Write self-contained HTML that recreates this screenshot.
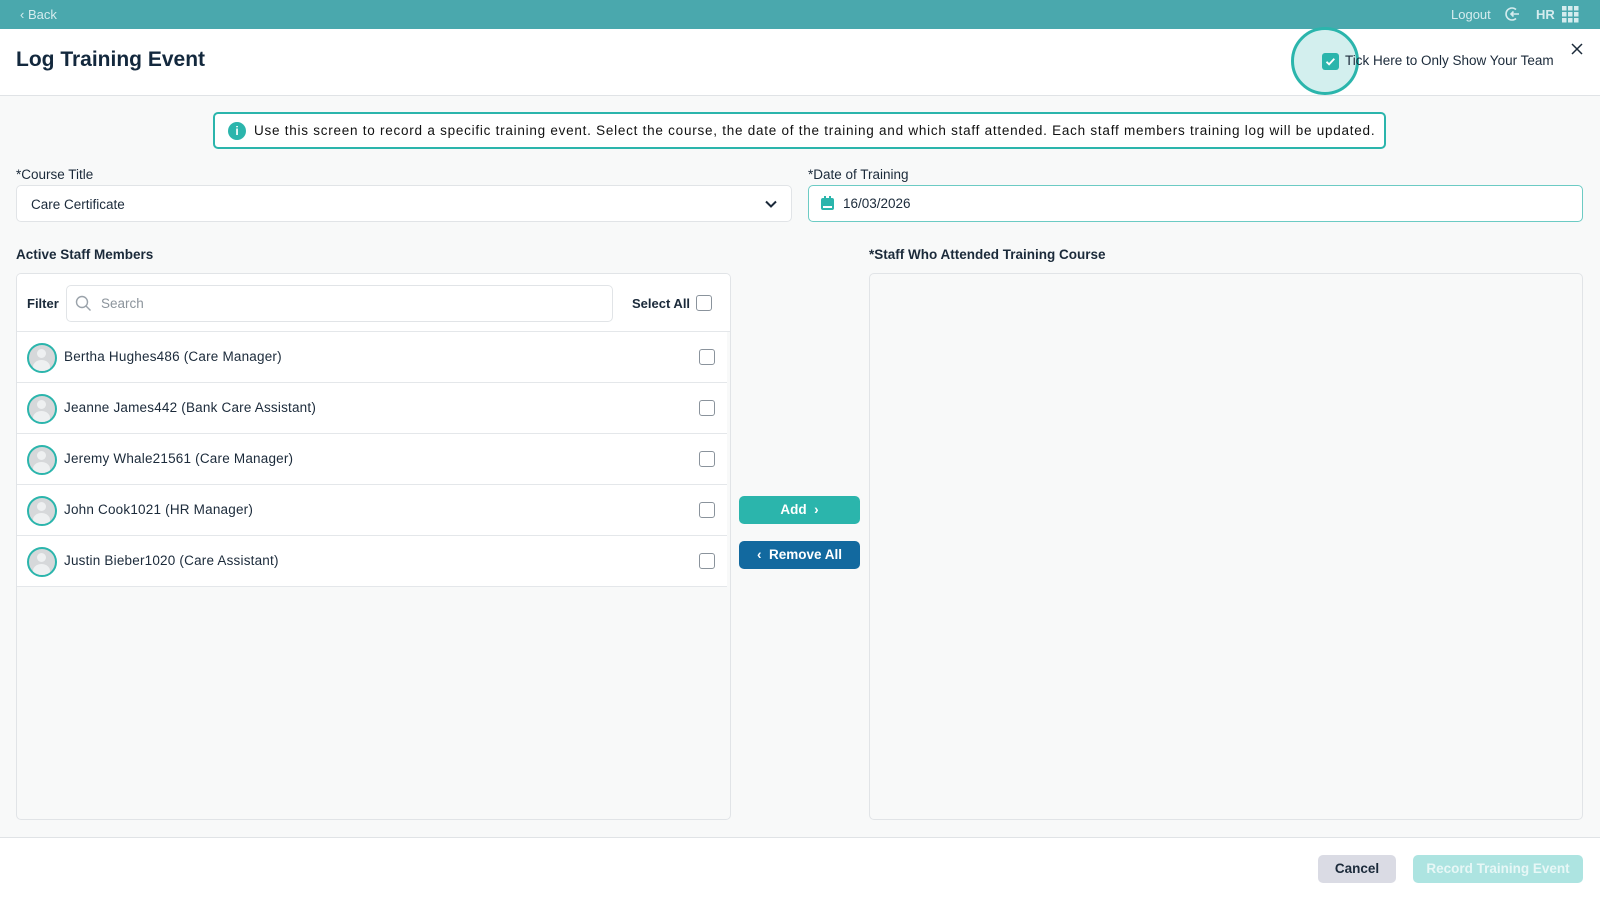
<!DOCTYPE html>
<html><head><meta charset="utf-8"><style>
*{box-sizing:border-box;margin:0;padding:0}
body{width:1600px;height:900px;overflow:hidden;background:#f8f9f9;font-family:"Liberation Sans",sans-serif;color:#1b2a3a;position:relative}
.abs{position:absolute}
.top{left:0;top:0;width:1600px;height:29px;background:#4aa8ad;color:#d5ecee;font-size:13px}
.hdr{left:0;top:29px;width:1600px;height:67px;background:#fff;border-bottom:1px solid #e0e3e6}
.lbl{font-size:13.5px;color:#1b2a3a}
.box{background:#fff;border:1px solid #e1e4e7;border-radius:5px}
.row{position:absolute;left:0;width:710px;height:51px;border-bottom:1px solid #e4e7ea;background:#fff}
.av{position:absolute;left:10px;top:11px;width:30px;height:30px;border-radius:50%;border:2.5px solid #2bb5ac;background:#d6d8da;overflow:hidden}
.av:before{content:"";position:absolute;left:8px;top:4px;width:9px;height:9px;border-radius:50%;background:#eef0f1}
.av:after{content:"";position:absolute;left:4px;top:15px;width:17px;height:14px;border-radius:50% 50% 0 0;background:#eef0f1}
.nm{position:absolute;left:47px;top:17px;font-size:13.5px;letter-spacing:0.2px}
.cb{position:absolute;width:16px;height:16px;border:1.5px solid #8a939c;border-radius:3px;background:#fff}
.btn{border-radius:5px;color:#fff;font-size:13.5px;font-weight:bold;text-align:center}
</style></head><body>
<div class="abs top">
 <div class="abs" style="left:20px;top:7px">‹ Back</div>
 <div class="abs" style="left:1451px;top:7px">Logout</div>
 <svg class="abs" style="left:1505px;top:6px" width="16" height="16" viewBox="0 0 16 16" fill="none" stroke="#d5ecee" stroke-width="1.6"><path d="M11 3.5A6 6 0 1 0 11 12.5"/><path d="M14 8H6M8.5 5.5L6 8l2.5 2.5"/></svg>
 <div class="abs" style="left:1536px;top:7px;font-weight:bold">HR</div>
 <svg class="abs" style="left:1562px;top:6px" width="17" height="17" viewBox="0 0 17 17" fill="#d5ecee"><rect x="0" y="0" width="4.5" height="4.5"/><rect x="6" y="0" width="4.5" height="4.5"/><rect x="12" y="0" width="4.5" height="4.5"/><rect x="0" y="6" width="4.5" height="4.5"/><rect x="6" y="6" width="4.5" height="4.5"/><rect x="12" y="6" width="4.5" height="4.5"/><rect x="0" y="12" width="4.5" height="4.5"/><rect x="6" y="12" width="4.5" height="4.5"/><rect x="12" y="12" width="4.5" height="4.5"/></svg>
</div>
<div class="abs hdr">
 <div class="abs" style="left:16px;top:19px;font-size:21px;font-weight:bold;color:#13283d">Log Training Event</div>
 <div class="abs" style="left:1291px;top:-2px;width:68px;height:68px;border-radius:50%;background:#d3efee;border:3.5px solid #2bb5ac"></div>
 <div class="abs" style="left:1322px;top:24px;width:17px;height:17px;border-radius:3px;background:#2bb5ac"><svg width="17" height="17" viewBox="0 0 17 17"><path d="M4.5 8.8l2.6 2.5 5.2-5.5" stroke="#fff" stroke-width="1.8" fill="none"/></svg></div>
 <div class="abs" style="left:1345px;top:24px;font-size:13.5px;color:#1b2a3a">Tick Here to Only Show Your Team</div>
 <svg class="abs" style="left:1571px;top:14px" width="12" height="12" viewBox="0 0 12 12"><path d="M1 1l10 10M11 1L1 11" stroke="#1b2a3a" stroke-width="1.5"/></svg>
</div>
<div class="abs" style="left:213px;top:112px;width:1173px;height:37px;border:2px solid #2bb5ac;border-radius:5px;background:#fff">
 <div class="abs" style="left:13px;top:8px;width:18px;height:18px;border-radius:50%;background:#2bb5ac;color:#fff;font-size:12px;font-weight:bold;text-align:center;line-height:18px">i</div>
 <div class="abs" style="left:39px;top:9px;font-size:13.5px;color:#111;white-space:nowrap;letter-spacing:0.75px">Use this screen to record a specific training event. Select the course, the date of the training and which staff attended. Each staff members training log will be updated.</div>
</div>
<div class="abs lbl" style="left:16px;top:167px">*Course Title</div>
<div class="abs box" style="left:16px;top:185px;width:776px;height:37px">
 <div class="abs" style="left:14px;top:11px;font-size:13.5px">Care Certificate</div>
 <svg class="abs" style="left:748px;top:13px" width="12" height="10" viewBox="0 0 12 10"><path d="M1 2.5l5 5 5-5" stroke="#1b2a3a" stroke-width="2" fill="none"/></svg>
</div>
<div class="abs lbl" style="left:808px;top:167px">*Date of Training</div>
<div class="abs box" style="left:808px;top:185px;width:775px;height:37px;border:1.5px solid #6ccbc4">
 <svg class="abs" style="left:11px;top:10px" width="15" height="15" viewBox="0 0 15 15"><rect x="1" y="2" width="13" height="12" rx="2" fill="#2bb5ac"/><rect x="3" y="10" width="9" height="2" fill="#fff"/><rect x="4" y="0" width="2" height="3" fill="#2bb5ac"/><rect x="9" y="0" width="2" height="3" fill="#2bb5ac"/></svg>
 <div class="abs" style="left:34px;top:10px;font-size:13.5px">16/03/2026</div>
</div>
<div class="abs lbl" style="left:16px;top:247px;font-weight:bold">Active Staff Members</div>
<div class="abs lbl" style="left:869px;top:247px;font-weight:bold">*Staff Who Attended Training Course</div>
<div class="abs box" style="left:16px;top:273px;width:715px;height:547px;background:#f8f9f9;overflow:hidden">
 <div class="abs" style="left:0;top:0;width:715px;height:58px;background:#fff;border-bottom:1px solid #e4e7ea">
  <div class="abs" style="left:10px;top:22px;font-size:13px;font-weight:bold">Filter</div>
  <div class="abs" style="left:49px;top:11px;width:547px;height:37px;border:1px solid #e1e4e7;border-radius:5px">
   <svg class="abs" style="left:8px;top:9px" width="17" height="17" viewBox="0 0 17 17"><circle cx="7" cy="7" r="5.5" stroke="#9aa2aa" stroke-width="1.4" fill="none"/><path d="M11 11l4.5 4.5" stroke="#9aa2aa" stroke-width="1.4"/></svg>
   <div class="abs" style="left:34px;top:10px;font-size:13.5px;color:#8c949c">Search</div>
  </div>
  <div class="abs" style="left:615px;top:22px;font-size:13px;font-weight:bold">Select All</div>
  <div class="cb" style="left:679px;top:21px"></div>
 </div>
 <div class="row" style="top:58px"><div class="av"></div><div class="nm">Bertha Hughes486 (Care Manager)</div><div class="cb" style="left:682px;top:17px"></div></div>
 <div class="row" style="top:109px"><div class="av"></div><div class="nm">Jeanne James442 (Bank Care Assistant)</div><div class="cb" style="left:682px;top:17px"></div></div>
 <div class="row" style="top:160px"><div class="av"></div><div class="nm">Jeremy Whale21561 (Care Manager)</div><div class="cb" style="left:682px;top:17px"></div></div>
 <div class="row" style="top:211px"><div class="av"></div><div class="nm">John Cook1021 (HR Manager)</div><div class="cb" style="left:682px;top:17px"></div></div>
 <div class="row" style="top:262px"><div class="av"></div><div class="nm">Justin Bieber1020 (Care Assistant)</div><div class="cb" style="left:682px;top:17px"></div></div>
</div>
<div class="abs btn" style="left:739px;top:496px;width:121px;height:28px;line-height:28px;background:#2bb5ac">Add &nbsp;›</div>
<div class="abs btn" style="left:739px;top:541px;width:121px;height:28px;line-height:28px;background:#12699f">‹ &nbsp;Remove All</div>
<div class="abs box" style="left:869px;top:273px;width:714px;height:547px;background:#f8f9f9"></div>
<div class="abs" style="left:0;top:837px;width:1600px;height:63px;background:#fff;border-top:1px solid #e0e3e6"></div>
<div class="abs btn" style="left:1318px;top:855px;width:78px;height:28px;line-height:28px;background:#dadbe4;color:#1b2a3a;font-weight:bold">Cancel</div>
<div class="abs btn" style="left:1413px;top:855px;width:170px;height:28px;line-height:28px;background:#ade4e1;color:#e7f7f6;font-weight:bold">Record Training Event</div>
</body></html>
